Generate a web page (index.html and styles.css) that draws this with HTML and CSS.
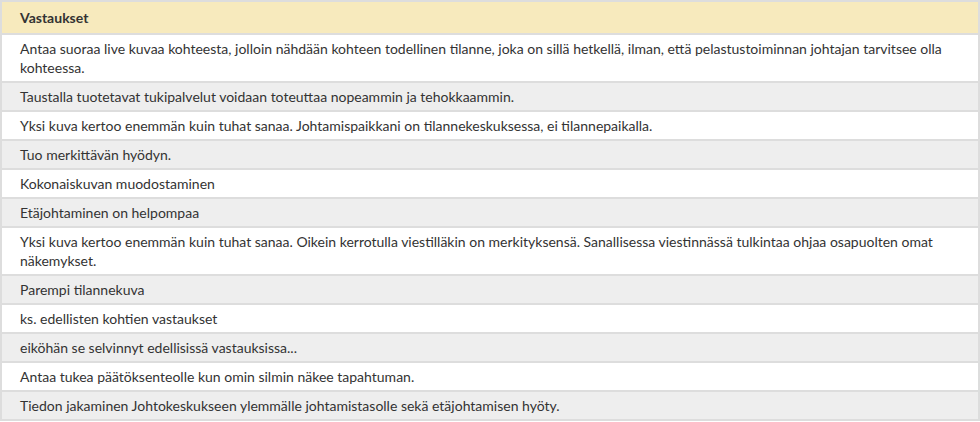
FILE: index.html
```html
<!DOCTYPE html>
<html lang="fi">
<head>
<meta charset="utf-8">
<title>Vastaukset</title>
<link rel="stylesheet" href="styles.css">
</head>
<body>
<table class="answers">
  <thead>
    <tr><th>Vastaukset</th></tr>
  </thead>
  <tbody>
    <tr><td>Antaa suoraa live kuvaa kohteesta, jolloin nähdään kohteen todellinen tilanne, joka on sillä hetkellä, ilman, että pelastustoiminnan johtajan tarvitsee olla kohteessa.</td></tr>
    <tr><td>Taustalla tuotetavat tukipalvelut voidaan toteuttaa nopeammin ja tehokkaammin.</td></tr>
    <tr><td>Yksi kuva kertoo enemmän kuin tuhat sanaa. Johtamispaikkani on tilannekeskuksessa, ei tilannepaikalla.</td></tr>
    <tr><td>Tuo merkittävän hyödyn.</td></tr>
    <tr><td>Kokonaiskuvan muodostaminen</td></tr>
    <tr><td>Etäjohtaminen on helpompaa</td></tr>
    <tr><td>Yksi kuva kertoo enemmän kuin tuhat sanaa. Oikein kerrotulla viestilläkin on merkityksensä. Sanallisessa viestinnässä tulkintaa ohjaa osapuolten omat näkemykset.</td></tr>
    <tr><td>Parempi tilannekuva</td></tr>
    <tr><td>ks. edellisten kohtien vastaukset</td></tr>
    <tr><td>eiköhän se selvinnyt edellisissä vastauksissa...</td></tr>
    <tr><td>Antaa tukea päätöksenteolle kun omin silmin näkee tapahtuman.</td></tr>
    <tr><td>Tiedon jakaminen Johtokeskukseen ylemmälle johtamistasolle sekä etäjohtamisen hyöty.</td></tr>
  </tbody>
</table>
</body>
</html>
```
FILE: styles.css
```css
html, body {
  margin: 0;
  padding: 0;
  background: #ffffff;
}
body {
  font-family: Lato, "Open Sans", sans-serif;
  font-size: 14px;
  color: #333333;
}
.answers {
  width: 980px;
  border-collapse: collapse;
  border: 2px solid #dddddd;
}
.answers th {
  text-align: left;
  font-weight: bold;
  background: #f7eabd;
  padding: 6px 10px 6px 18px;
  line-height: 19px;
  border-bottom: 2px solid #dddddd;
}
.answers td {
  padding: 4px 10px 4px 18px;
  line-height: 19px;
  border-bottom: 2px solid #dddddd;
}
.answers tbody tr:nth-child(even) td {
  background: #eeeeee;
}
```
